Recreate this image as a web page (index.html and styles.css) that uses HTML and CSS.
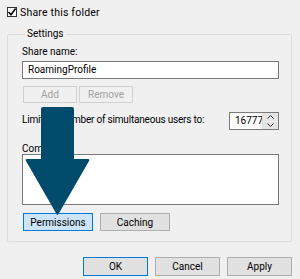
FILE: index.html
```html
<!DOCTYPE html>
<html lang="en">
<head>
  <meta charset="UTF-8">
  <title>Advanced Sharing</title>
  <link rel="stylesheet" href="styles.css">
</head>
<body>
  <div class="dialog">
    <label class="share">
      <span class="check">
        <svg width="10" height="10" viewBox="0 0 10 10"><path d="M1.5 5 L4 7.8 L8.6 1.6" fill="none" stroke="#000" stroke-width="1.6"/></svg>
      </span>
      <span class="share-text">Share this folder</span>
    </label>

    <fieldset class="settings">
      <legend>Settings</legend>
      <div class="label">Share name:</div>
      <div class="textbox">RoamingProfile</div>
      <div class="row small">
        <button class="btn" disabled>Add</button>
        <button class="btn" disabled>Remove</button>
      </div>
      <div class="limit">
        <span class="limit-text">Limit the number of simultaneous users to:</span>
        <div class="spin">
          <span class="spin-val">16777</span>
          <div class="spin-btns">
            <span class="spin-btn"><svg width="7" height="4" viewBox="0 0 7 4"><path d="M0.5 3.5 L3.5 0.5 L6.5 3.5" fill="none" stroke="#333" stroke-width="1"/></svg></span>
            <span class="spin-btn"><svg width="7" height="4" viewBox="0 0 7 4"><path d="M0.5 0.5 L3.5 3.5 L6.5 0.5" fill="none" stroke="#333" stroke-width="1"/></svg></span>
          </div>
        </div>
      </div>
      <div class="label comments-label">Comments:</div>
      <div class="comments"></div>
      <div class="row wide">
        <button class="btn hot">Permissions</button>
        <button class="btn">Caching</button>
      </div>
    </fieldset>

    <div class="footer">
      <button class="btn default">OK</button>
      <button class="btn">Cancel</button>
      <button class="btn">Apply</button>
    </div>

    <!-- callout arrow drawn over the dialog -->
    <svg class="arrow" width="300" height="279" viewBox="0 0 300 279">
      <path d="M41 109 Q41 107 43 107 L72 107 Q74 107 74 109 L74 159 L88 159 Q90 159 89 161 L58.5 214 Q57.5 216 56.5 214 L26 161 Q25 159 27 159 L41 159 Z" fill="#004a6b"/>
    </svg>
  </div>
</body>
</html>
```

FILE: styles.css
```css
html, body {
  margin: 0;
  background: #f0f0f0;
  color: #000;
  font-family: Roboto, "Liberation Sans", sans-serif;
  font-size: 10px;
}
.dialog {
  position: relative;
  width: 300px;
  height: 279px;
  overflow: hidden;
}
.share {
  display: flex;
  align-items: center;
  gap: 3px;
  height: 12px;
  margin: 6px 7px 0;
}
.share-text {
  font-size: 10.5px;
  letter-spacing: 0.2px;
}
.check {
  display: block;
  width: 10px;
  height: 10px;
  box-sizing: border-box;
  border: 1px solid #333;
  background: #fff;
}
.check svg {
  display: block;
  margin: -1px;
}
.settings {
  margin: 10px 8px 0 7px;
  padding: 6px 12px 10px 14px;
  border: 1px solid #dcdcdc;
  border-radius: 2px;
  min-width: 0;
}
.settings legend {
  padding: 0 2px;
  margin-left: 3px;
  line-height: 12px;
}
.label {
  line-height: 12px;
}
.textbox {
  margin-top: 3px;
  height: 18px;
  box-sizing: border-box;
  border: 1px solid #7a7a7a;
  background: #fff;
  padding: 0 5px;
  line-height: 16px;
}
.row {
  display: flex;
  margin-left: 1px;
}
.row.small {
  margin-top: 7px;
  gap: 2px;
}
.row.small .btn {
  width: 54px;
  height: 17px;
}
.row.wide {
  margin-top: 8px;
  gap: 7px;
}
.row.wide .btn {
  width: 70px;
  height: 18px;
}
.btn {
  box-sizing: border-box;
  margin: 0;
  padding: 0;
  font: inherit;
  color: #000;
  background: #e1e1e1;
  border: 1px solid #adadad;
}
.btn:disabled {
  color: #a0a0a0;
  background: #f0f0f0;
  border-color: #d0d0d0;
}
.btn.hot {
  background: #cce4f7;
  border-color: #0078d7;
}
.btn.default {
  border-color: #0078d7;
}
.limit {
  display: flex;
  justify-content: space-between;
  margin-top: 9px;
}
.limit-text {
  line-height: 12px;
  padding-top: 2px;
  letter-spacing: -0.2px;
}
.spin {
  display: flex;
  width: 50px;
  height: 18px;
  box-sizing: border-box;
  border: 1px solid #7a7a7a;
  background: #fff;
}
.spin-val {
  flex: 1;
  padding-left: 5px;
  line-height: 16px;
  overflow: hidden;
}
.spin-btns {
  display: flex;
  flex-direction: column;
  width: 15px;
  border-left: 1px solid #dcdcdc;
}
.spin-btn {
  flex: 1;
  display: flex;
  align-items: center;
  justify-content: center;
  background: #e5e5e5;
}
.spin-btn + .spin-btn {
  border-top: 1px solid #f0f0f0;
}
.comments-label {
  margin-top: 13px;
  line-height: 11px;
}
.comments {
  height: 51px;
  box-sizing: border-box;
  border: 1px solid #7a7a7a;
  background: #fff;
}
.footer {
  display: flex;
  justify-content: flex-end;
  gap: 7px;
  margin: 15px 8px 0 0;
}
.footer .btn {
  width: 65px;
  height: 19px;
}
.arrow {
  position: absolute;
  left: 0;
  top: 0;
  pointer-events: none;
}
```
